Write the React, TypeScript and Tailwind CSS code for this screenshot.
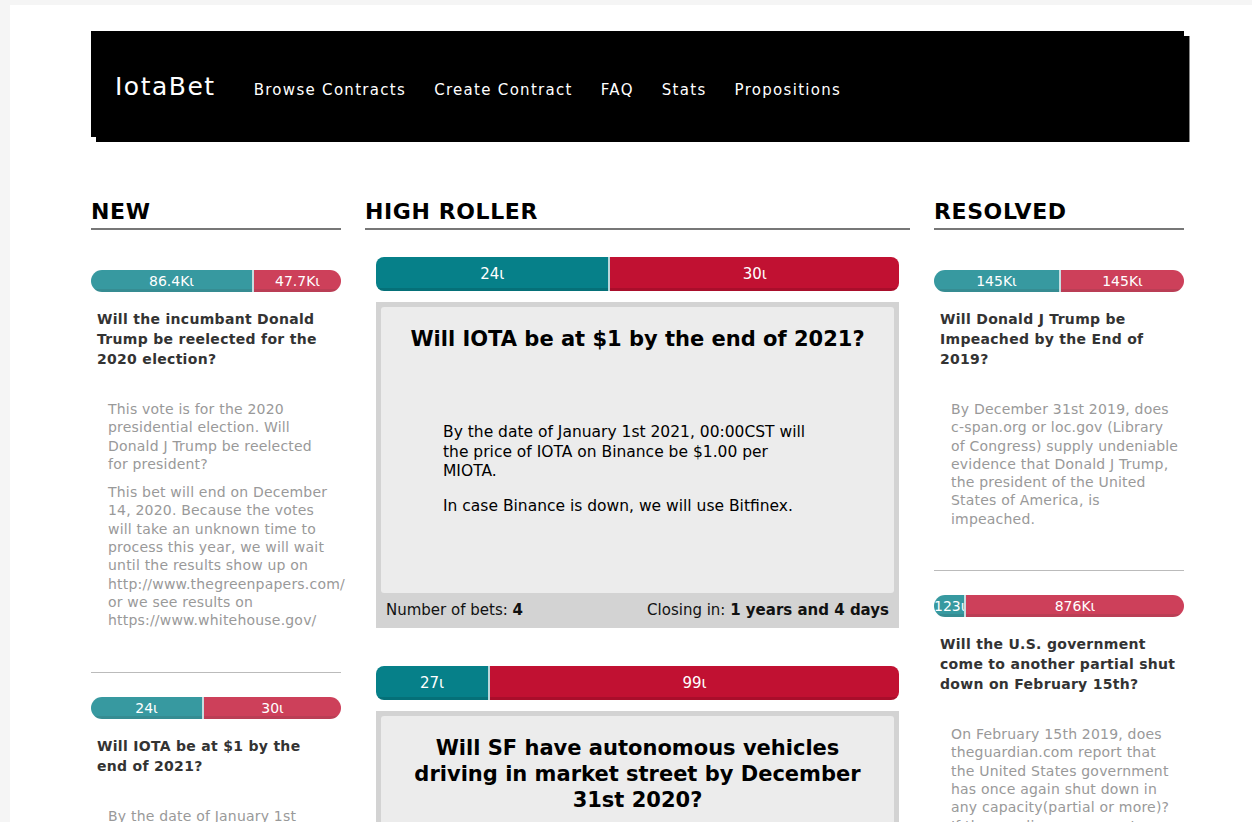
import React from 'react'

const font = {fontFamily: '"DejaVu Sans", "Liberation Sans", sans-serif'}

type BarProps = {yes: number; no: number; yesLabel: string; noLabel: string; big?: boolean}

function Bar({yes, no, yesLabel, noLabel, big}: BarProps) {
  const pct = (yes / (yes + no)) * 100
  return (
    <div
      className={
        big
          ? 'flex h-[34px] w-full overflow-hidden rounded-[8px] text-[15px] leading-[34px] text-white'
          : 'flex h-[22px] w-full overflow-hidden rounded-full text-[14px] leading-[22px] text-white opacity-80'
      }
    >
      <div
        className="min-w-[30px] overflow-hidden whitespace-nowrap bg-[#068089] text-center shadow-[inset_0_-3px_0_rgba(0,0,0,0.12)]"
        style={{width: `${pct}%`}}
      >
        {yesLabel}ι
      </div>
      <div className="flex-1 overflow-hidden whitespace-nowrap border-l-2 border-[#b9d6da] bg-[#c11132] text-center shadow-[inset_0_-3px_0_rgba(0,0,0,0.12)]">
        {noLabel}ι
      </div>
    </div>
  )
}

function Heading({children}: {children: React.ReactNode}) {
  return (
    <h2 className="border-b-2 border-[#777] pt-[2px] pb-[3px] text-[22px] font-bold leading-[26px] tracking-[0.6px] text-black">
      {children}
    </h2>
  )
}

type SideBet = {yes: number; no: number; yesLabel: string; noLabel: string; title: string; desc: string[]}

function SideItem({bet, first, wide}: {bet: SideBet; first?: boolean; wide?: boolean}) {
  return (
    <div className={first ? 'pt-[40px]' : 'border-t border-[#bbb] pt-[24px]'}>
      <Bar yes={bet.yes} no={bet.no} yesLabel={bet.yesLabel} noLabel={bet.noLabel} />
      <h3 className="mt-[17px] px-[6px] text-[14px] font-bold leading-[20px] tracking-[0.3px] text-[#333]">{bet.title}</h3>
      <div
        className={
          (wide ? 'w-[246px] ' : 'w-[242px] ') +
          'mt-[31px] pl-[17px] pb-[42px] text-[14px] leading-[18.3px] tracking-[0.2px] text-[#999]'
        }
      >
        {bet.desc.map((p, i) => (
          <p key={i} className={i > 0 ? 'mt-[10px]' : ''}>
            {p}
          </p>
        ))}
      </div>
    </div>
  )
}

type BigBet = {yes: number; no: number; title: string; desc: string[]; bets: number; closing: string}

function BigItem({bet}: {bet: BigBet}) {
  return (
    <div className="px-[11px] pb-[38px]">
      <Bar yes={bet.yes} no={bet.no} yesLabel={String(bet.yes)} noLabel={String(bet.no)} big />
      <div className="mt-[11px] bg-[#d3d3d3] px-[5px] pt-[5px]">
        <div className="h-[286px] rounded-[3px] bg-[#ececec] px-[25px] pt-[19px]">
          <h3 className="text-center text-[21px] font-bold leading-[26px] text-black">{bet.title}</h3>
          <div className="mt-[71px] w-[412px] pl-[37px] text-[15.5px] leading-[19.5px] text-black">
            {bet.desc.map((p, i) => (
              <p key={i} className={i > 0 ? 'mt-[15px]' : ''}>
                {p}
              </p>
            ))}
          </div>
        </div>
        <div className="flex h-[35px] items-center justify-between px-[5px] text-[15px] text-[#111]">
          <span>
            Number of bets: <b>{bet.bets}</b>
          </span>
          <span>
            Closing in: <b>{bet.closing}</b>
          </span>
        </div>
      </div>
    </div>
  )
}

const newBets: SideBet[] = [
  {
    yes: 86.4,
    no: 47.7,
    yesLabel: '86.4K',
    noLabel: '47.7K',
    title: 'Will the incumbant Donald Trump be reelected for the 2020 election?',
    desc: [
      'This vote is for the 2020 presidential election. Will Donald J Trump be reelected for president?',
      'This bet will end on December 14, 2020. Because the votes will take an unknown time to process this year, we will wait until the results show up on http://www.thegreenpapers.com/ or we see results on https://www.whitehouse.gov/'
    ]
  },
  {
    yes: 24,
    no: 30,
    yesLabel: '24',
    noLabel: '30',
    title: 'Will IOTA be at $1 by the end of 2021?',
    desc: ['By the date of January 1st 2021, 00:00CST will the price of IOTA on Binance be $1.00 per MIOTA.', 'In case Binance is down, we will use Bitfinex.']
  }
]

const resolvedBets: SideBet[] = [
  {
    yes: 145,
    no: 145,
    yesLabel: '145K',
    noLabel: '145K',
    title: 'Will Donald J Trump be Impeached by the End of 2019?',
    desc: [
      'By December 31st 2019, does c\u2011span.org or loc.gov (Library of Congress) supply undeniable evidence that Donald J Trump, the president of the United States of America, is impeached.'
    ]
  },
  {
    yes: 0.123,
    no: 876,
    yesLabel: '123',
    noLabel: '876K',
    title: 'Will the U.S. government come to another partial shut down on February 15th?',
    desc: [
      'On February 15th 2019, does theguardian.com report that the United States government has once again shut down in any capacity(partial or more)? If theguardian.com reports a shutdown, the bet resolves yes.'
    ]
  }
]

const highBets: BigBet[] = [
  {
    yes: 24,
    no: 30,
    title: 'Will IOTA be at $1 by the end of 2021?',
    desc: ['By the date of January 1st 2021, 00:00CST will the price of IOTA on Binance be $1.00 per MIOTA.', 'In case Binance is down, we will use Bitfinex.'],
    bets: 4,
    closing: '1 years and 4 days'
  },
  {
    yes: 27,
    no: 99,
    title: 'Will SF have autonomous vehicles driving in market street by December 31st 2020?',
    desc: ['By December 31st 2020, do autonomous vehicles drive on Market Street in San Francisco?'],
    bets: 3,
    closing: '1 years and 4 days'
  }
]

export default function App() {
  return (
    <div className="min-h-screen bg-[#f5f5f5] pl-[10px] pt-[5px]" style={font}>
      <div className="min-h-screen bg-white pl-[81px] pt-[26px] pb-[40px]">
        <header className="flex h-[106px] w-[1093px] items-center bg-black pl-[24px] shadow-[5px_5px_0_#000,6px_5px_0_#888]">
          <span className="mt-[6px] text-[25px] tracking-[1.5px] text-white">IotaBet</span>
          <nav className="ml-[38px] mt-[12px] flex gap-[28px] text-[15px] tracking-[1.3px] text-white">
            <a>Browse Contracts</a>
            <a>Create Contract</a>
            <a>FAQ</a>
            <a>Stats</a>
            <a>Propositions</a>
          </nav>
        </header>

        <main className="mt-[60px] grid w-[1094px] grid-cols-[250px_545px_250px] gap-x-[24px]">
          <section>
            <Heading>NEW</Heading>
            {newBets.map((b, i) => (
              <SideItem key={i} bet={b} first={i === 0} />
            ))}
          </section>
          <section>
            <Heading>HIGH ROLLER</Heading>
            <div className="pt-[27px]">
              {highBets.map((b, i) => (
                <BigItem key={i} bet={b} />
              ))}
            </div>
          </section>
          <section>
            <Heading>RESOLVED</Heading>
            {resolvedBets.map((b, i) => (
              <SideItem key={i} bet={b} first={i === 0} wide />
            ))}
          </section>
        </main>
      </div>
    </div>
  )
}
